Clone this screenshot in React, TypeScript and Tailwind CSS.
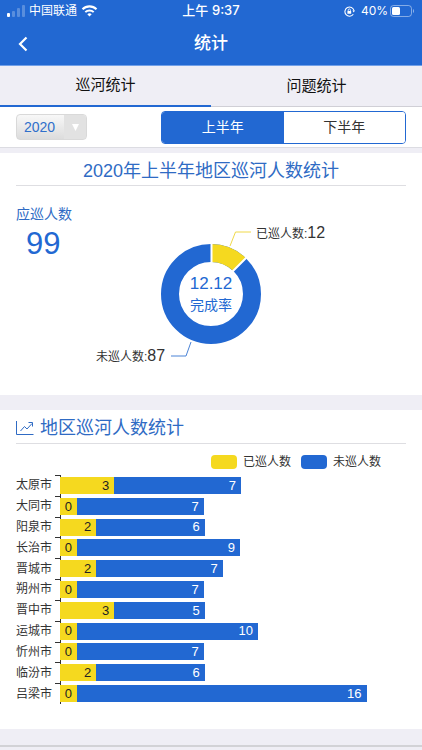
import { useState } from "react";

type District = { name: string; done: number; pending: number };

const districts: District[] = [
  { name: "太原市", done: 3, pending: 7 },
  { name: "大同市", done: 0, pending: 7 },
  { name: "阳泉市", done: 2, pending: 6 },
  { name: "长治市", done: 0, pending: 9 },
  { name: "晋城市", done: 2, pending: 7 },
  { name: "朔州市", done: 0, pending: 7 },
  { name: "晋中市", done: 3, pending: 5 },
  { name: "运城市", done: 0, pending: 10 },
  { name: "忻州市", done: 0, pending: 7 },
  { name: "临汾市", done: 2, pending: 6 },
  { name: "吕梁市", done: 0, pending: 16 },
];

// One person as a share of the plot width.
const UNIT = 5.23;

function StatusBar() {
  return (
    <div className="grid h-[22px] grid-cols-[1fr_auto_1fr] items-center px-[7px] text-xs text-white">
      <div className="flex items-center gap-1">
        <svg width="18" height="12" viewBox="0 0 18 12" fill="#fff" aria-hidden="true">
          <rect x="0" y="8" width="3" height="4" rx="1" />
          <rect x="5" y="6" width="3" height="6" rx="1" opacity="0.25" />
          <rect x="10" y="3" width="3" height="9" rx="1" opacity="0.25" />
          <rect x="15" y="0" width="3" height="12" rx="1" opacity="0.25" />
        </svg>
        <span>中国联通</span>
        <svg width="17" height="12" viewBox="0 0 17 12" fill="none" aria-hidden="true">
          <path d="M1.5 4.2a10 10 0 0 1 14 0" stroke="#fff" strokeWidth="2.1" />
          <path d="M4.3 7.1a6 6 0 0 1 8.4 0" stroke="#fff" strokeWidth="2" />
          <path d="M6.3 9.2a3.2 3.2 0 0 1 4.4 0L8.5 11.6z" fill="#fff" />
        </svg>
      </div>
      <span className="text-[13px] font-medium">
        上午 <span className="font-['Inter','Liberation_Sans',sans-serif]">9:37</span>
      </span>
      <div className="flex items-center justify-end">
        <svg className="mr-[6px]" width="11" height="11" viewBox="0 0 11 11" fill="none" stroke="#fff" aria-hidden="true">
          <path d="M9.3 8.3A4.6 4.6 0 1 1 10 4.6" strokeWidth="1.1" />
          <path d="M8.4 4.5h2.6L9.7 6.6z" fill="#fff" stroke="none" />
          <rect x="3.4" y="4.9" width="3.8" height="2.9" rx="0.4" fill="#fff" stroke="none" />
          <path d="M4.2 5V4a1.1 1.1 0 0 1 2.2 0v1" strokeWidth="0.8" />
        </svg>
        <span className="mr-[2px] font-['Inter','Liberation_Sans',sans-serif]">40%</span>
        <svg width="25" height="12" viewBox="0 0 25 12" aria-hidden="true">
          <rect x="0.5" y="0.5" width="21" height="11" rx="3" fill="none" stroke="#fff" strokeOpacity="0.45" />
          <rect x="2" y="2" width="8" height="8" rx="1.5" fill="#fff" />
          <path d="M23 4v4c1.4-.6 1.4-3.4 0-4z" fill="#fff" fillOpacity="0.5" />
        </svg>
      </div>
    </div>
  );
}

function Donut() {
  return (
    <svg className="block w-full" height="150" viewBox="0 0 270 150" role="img" aria-label="完成率">
      <g fill="none" strokeWidth="18">
        <circle cx="135" cy="79" r="41" stroke="#2268d2" />
        <path d="M135 38A41 41 0 0 1 163.3 49.3" stroke="#f5d91f" />
      </g>
      <path d="M135.500 49V27M156.5 56.5L172 41" stroke="#fff" strokeWidth="2" />
      <path d="M154 31L159.500 17H175" fill="none" stroke="#f0d94a" />
      <path d="M115 127L110 141H95" fill="none" stroke="#4b83d6" />
      <g fill="#2268d2" textAnchor="middle">
        <text x="135" y="74" fontSize="17">12.12</text>
        <text x="135" y="95" fontSize="14">完成率</text>
      </g>
      <g fill="#333">
        <text x="180" y="23" fontSize="12">
          已巡人数:<tspan fontSize="16">12</tspan>
        </text>
        <text x="20" y="146" fontSize="12">
          未巡人数:<tspan fontSize="16">87</tspan>
        </text>
      </g>
    </svg>
  );
}

function BarRow({ name, done, pending }: District) {
  return (
    <li className="flex items-stretch text-xs">
      <span className="w-9 self-center text-[#333]">{name}</span>
      <span className="ml-[3px] w-[6px] border-t border-r border-[#333]" />
      <span className="-ml-px flex flex-1 items-center text-[13px]">
        <span
          className="flex h-[17px] min-w-[17px] items-center justify-end bg-[#f5d91f] pr-[5px] text-[#222]"
          style={{ width: `${done * UNIT}%` }}
        >
          {done}
        </span>
        <span
          className="flex h-[17px] items-center justify-end bg-[#2268d2] pr-[5px] text-white"
          style={{ width: `${pending * UNIT}%` }}
        >
          {pending}
        </span>
      </span>
    </li>
  );
}

export default function App() {
  const [tab, setTab] = useState(0);
  const [half, setHalf] = useState(0);

  return (
    <div className="min-h-screen bg-[#efeef5] font-['Liberation_Sans','Noto_Sans_CJK_SC',sans-serif]">
      <header className="border-b border-[#72a0e8] bg-[#2268d2] text-white">
        <StatusBar />
        <div className="grid h-[43px] grid-cols-[44px_1fr_44px] items-center">
          <button type="button" aria-label="返回" className="flex h-full items-center pl-[18px]">
            <svg width="10" height="16" viewBox="0 0 10 16" fill="none" stroke="#fff" strokeWidth="2.2" aria-hidden="true">
              <path d="M8.500 1.500L2 8l6.500 6.500" />
            </svg>
          </button>
          <h1 className="text-center text-[17px] font-medium">统计</h1>
        </div>
      </header>

      <nav className="grid h-[41px] grid-cols-2 text-[15px] text-[#111]">
        {["巡河统计", "问题统计"].map((label, i) => (
          <button
            key={label}
            type="button"
            onClick={() => setTab(i)}
            className={tab === i ? "border-b-2 border-[#2268d2]" : "border-b border-[#d0cfd6]"}
          >
            {label}
          </button>
        ))}
      </nav>

      <div className="flex h-[41px] items-center justify-between border-b border-[#dcdce2] bg-white px-4">
        <div className="grid h-[26px] w-[71px] grid-cols-1 overflow-hidden rounded border border-[#d9d9d9] bg-linear-to-b from-[#f8f8f8] to-[#dcdcdc]">
          <select
            aria-label="年份"
            className="col-start-1 row-start-1 appearance-none bg-transparent pl-[7px] text-sm text-[#2f6fcb] outline-none"
          >
            <option>2020</option>
            <option>2019</option>
          </select>
          <span className="pointer-events-none col-start-1 row-start-1 flex w-[22px] items-center justify-center justify-self-end bg-[#e2e2e2]">
            <svg width="7" height="7" viewBox="0 0 7 7" fill="#fff" aria-hidden="true">
              <path d="M0 0h7L3.500 7z" />
            </svg>
          </span>
        </div>
        <div className="grid h-[33px] w-[245px] grid-cols-2 overflow-hidden rounded border border-[#2268d2] text-sm">
          {["上半年", "下半年"].map((label, i) => (
            <button
              key={label}
              type="button"
              onClick={() => setHalf(i)}
              className={half === i ? "bg-[#2268d2] text-white" : "bg-white text-[#333]"}
            >
              {label}
            </button>
          ))}
        </div>
      </div>

      <section className="mt-[5px] bg-white px-4 pb-[30px]">
        <h2 className="flex h-[33px] items-center justify-center border-b border-[#dedee2] pt-[4px] text-lg text-[#2f6bc4]">
          2020年上半年地区巡河人数统计
        </h2>
        <div className="grid grid-cols-[1fr_270px_1fr] pt-[18px]">
          <div className="text-[#2f6bc4]">
            <p className="text-sm leading-5 whitespace-nowrap">应巡人数</p>
            <p className="pl-[10px] text-[31px] leading-10 text-[#2268d2]">99</p>
          </div>
          <div className="pt-[11px]">
            <Donut />
          </div>
        </div>
      </section>

      <section className="mt-[15px] bg-white px-4 pb-[25px]">
        <h2 className="flex h-[34px] items-center gap-[6px] border-b border-[#dedee2] pt-[2px] text-lg text-[#2f6bc4]">
          <svg width="18" height="14" viewBox="0 0 18 14" fill="none" stroke="#2f6bc4" aria-hidden="true">
            <path d="M.5 0v13.500H17.500M4.500 10l4-4.500 2.500 2.500 5-5.500M12.500 1.500H16.500V5.500" />
          </svg>
          地区巡河人数统计
        </h2>
        <div className="flex h-[31px] items-center justify-end gap-[10px] pt-[4px] pr-[25px] text-xs text-[#333]">
          <span className="flex items-center gap-[6px]">
            <i className="h-[14px] w-[26px] rounded bg-[#f5d91f]" />
            已巡人数
          </span>
          <span className="flex items-center gap-[6px]">
            <i className="h-[14px] w-[26px] rounded bg-[#2268d2]" />
            未巡人数
          </span>
        </div>
        <ul className="grid h-[229px] auto-rows-fr">
          {districts.map((d) => (
            <BarRow key={d.name} {...d} />
          ))}
        </ul>
      </section>

      <div className="mt-[16px] h-[5px] border-t-2 border-[#d2d2d6] bg-[#efeef5]" />
    </div>
  );
}
